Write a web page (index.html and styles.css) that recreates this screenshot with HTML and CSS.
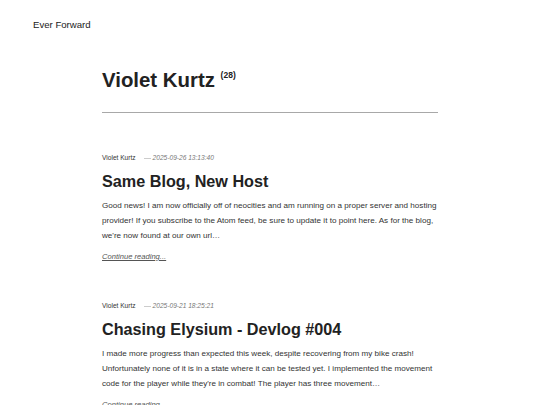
FILE: index.html
```html
<!DOCTYPE html>
<html>
<head>
<meta charset="utf-8">
<link rel="stylesheet" href="styles.css">
</head>
<body>
<header class="site-header">
  <a class="site-title" href="#">Ever Forward</a>
</header>
<main class="content">
  <h1 class="page-title">Violet Kurtz <sup class="count">(28)</sup></h1>
  <hr class="rule">
  <article class="post">
    <div class="meta"><span class="author">Violet Kurtz</span><span class="sep"></span><span class="date">2025-09-26 13:13:40</span></div>
    <h2 class="post-title">Same Blog, New Host</h2>
    <p class="excerpt">Good news! I am now officially off of neocities and am running on a proper server and hosting provider! If you subscribe to the Atom feed, be sure to update it to point here. As for the blog, we're now found at our own url…</p>
    <a class="more" href="#">Continue reading...</a>
  </article>
  <article class="post">
    <div class="meta"><span class="author">Violet Kurtz</span><span class="sep"></span><span class="date">2025-09-21 18:25:21</span></div>
    <h2 class="post-title">Chasing Elysium - Devlog #004</h2>
    <p class="excerpt">I made more progress than expected this week, despite recovering from my bike crash! Unfortunately none of it is in a state where it can be tested yet. I implemented the movement code for the player while they're in combat! The player has three movement…</p>
    <a class="more" href="#">Continue reading...</a>
  </article>
</main>
</body>
</html>
```
FILE: styles.css
```css
html, body {
  margin: 0;
  padding: 0;
  background: #ffffff;
}
body {
  font-family: "Liberation Sans", Arial, sans-serif;
  color: #222222;
}
.site-header {
  padding: 14px 0 0 33px;
  height: 30px;
}
.site-title {
  font-size: 9.6px;
  color: #222222;
  text-decoration: none;
}
.content {
  width: 336px;
  margin: 0 auto;
}
.page-title {
  margin: 24px 0 0 0;
  font-size: 20.4px;
  font-weight: bold;
  line-height: 24px;
  color: #222222;
}
.count {
  font-size: 8.5px;
  vertical-align: 9px;
  line-height: 0;
}
.rule {
  border: 0;
  border-top: 1px solid #a8a8a8;
  margin: 20px 0 0 0;
}
.post {
  margin-top: 41px;
}
.post + .post {
  margin-top: 39px;
}
.meta {
  display: flex;
  align-items: center;
  font-size: 6.6px;
  line-height: 8px;
  color: #333333;
}
.sep {
  width: 7px;
  border-top: 1px solid #cccccc;
  margin: 0 2px 0 8px;
}
.date {
  font-style: italic;
  color: #777777;
}
.post-title {
  margin: 9px 0 0 0;
  font-size: 16.2px;
  line-height: 20px;
  font-weight: bold;
  color: #222222;
}
.excerpt {
  margin: 7px 0 0 0;
  font-size: 8.1px;
  line-height: 15px;
  color: #333333;
}
.more {
  display: inline-block;
  margin-top: 9px;
  font-size: 7.6px;
  line-height: 10px;
  font-style: italic;
  color: #555555;
}
```
